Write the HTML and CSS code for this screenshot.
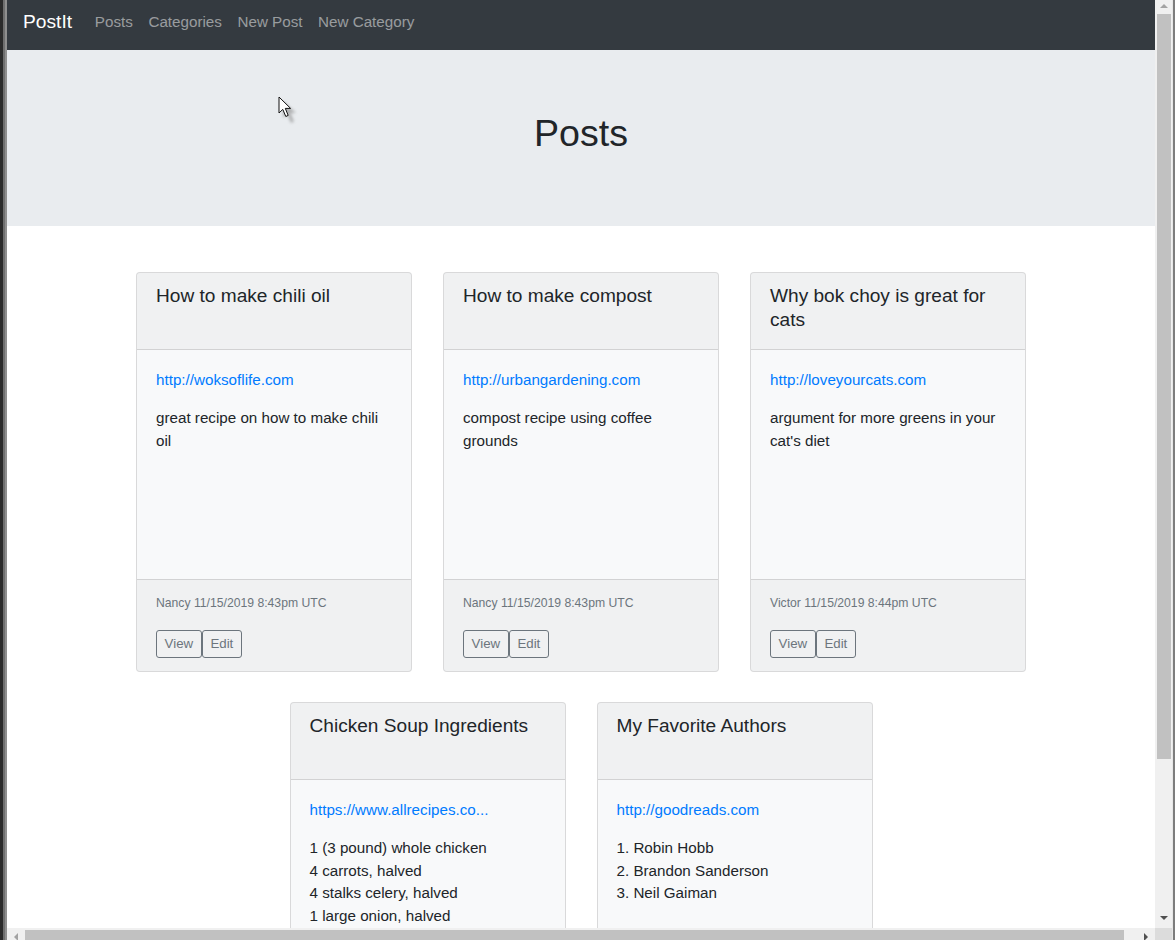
FILE: index.html
```html
<!DOCTYPE html>
<html lang="en">
<head>
<meta charset="utf-8">
<title>PostIt</title>
<link rel="stylesheet" href="styles.css">
</head>
<body>
<div class="window">
  <div class="left-edge"></div>
  <div class="main">
    <div class="view-row">
      <div class="viewport">
        <nav class="navbar">
          <a class="brand" href="#">PostIt</a>
          <a class="nav-link" href="#">Posts</a>
          <a class="nav-link" href="#">Categories</a>
          <a class="nav-link" href="#">New Post</a>
          <a class="nav-link" href="#">New Category</a>
        </nav>
        <header class="jumbotron">
          <h1 class="page-title">Posts</h1>
          <svg class="cursor" width="24" height="30" viewBox="0 0 24 30">
            <defs><filter id="blur" x="-50%" y="-50%" width="200%" height="200%"><feGaussianBlur stdDeviation="1.6"/></filter></defs>
            <path d="M5 5 L5 22 L9 18 L13 27 L16 25.5 L12.5 17 L18 17 Z" fill="#8a8a8a" opacity="0.6" filter="url(#blur)"/>
            <path d="M1 1 L1 17 L4.8 13.4 L7.8 20.5 L10.2 19.4 L7.3 12.4 L12.6 12.4 Z" fill="#fff" stroke="#111" stroke-width="1" stroke-linejoin="miter"/>
          </svg>
        </header>
        <main class="container">
          <div class="cards">
            <article class="card">
              <div class="card-header"><h5 class="card-title">How to make chili oil</h5></div>
              <div class="card-body">
                <p class="card-link"><a href="#">http://woksoflife.com</a></p>
                <p class="card-text">great recipe on how to make chili oil</p>
              </div>
              <div class="card-footer">
                <p class="meta">Nancy 11/15/2019 8:43pm UTC</p>
                <div class="actions"><a class="btn" href="#">View</a><a class="btn" href="#">Edit</a></div>
              </div>
            </article>
            <article class="card">
              <div class="card-header"><h5 class="card-title">How to make compost</h5></div>
              <div class="card-body">
                <p class="card-link"><a href="#">http://urbangardening.com</a></p>
                <p class="card-text">compost recipe using coffee grounds</p>
              </div>
              <div class="card-footer">
                <p class="meta">Nancy 11/15/2019 8:43pm UTC</p>
                <div class="actions"><a class="btn" href="#">View</a><a class="btn" href="#">Edit</a></div>
              </div>
            </article>
            <article class="card">
              <div class="card-header"><h5 class="card-title">Why bok choy is great for cats</h5></div>
              <div class="card-body">
                <p class="card-link"><a href="#">http://loveyourcats.com</a></p>
                <p class="card-text">argument for more greens in your cat's diet</p>
              </div>
              <div class="card-footer">
                <p class="meta">Victor 11/15/2019 8:44pm UTC</p>
                <div class="actions"><a class="btn" href="#">View</a><a class="btn" href="#">Edit</a></div>
              </div>
            </article>
            <article class="card">
              <div class="card-header"><h5 class="card-title">Chicken Soup Ingredients</h5></div>
              <div class="card-body">
                <p class="card-link"><a href="#">https://www.allrecipes.co...</a></p>
                <p class="card-text">1 (3 pound) whole chicken<br>4 carrots, halved<br>4 stalks celery, halved<br>1 large onion, halved</p>
              </div>
            </article>
            <article class="card">
              <div class="card-header"><h5 class="card-title">My Favorite Authors</h5></div>
              <div class="card-body">
                <p class="card-link"><a href="#">http://goodreads.com</a></p>
                <p class="card-text">1. Robin Hobb<br>2. Brandon Sanderson<br>3. Neil Gaiman</p>
              </div>
            </article>
          </div>
        </main>
      </div>
      <div class="vscroll">
        <div class="arrow-up"></div>
        <div class="vthumb"></div>
        <div class="vspace"></div>
        <div class="arrow-down"></div>
      </div>
    </div>
    <div class="hscroll">
      <div class="arrow-left"></div>
      <div class="hthumb"></div>
      <div class="arrow-right"></div>
      <div class="corner"></div>
    </div>
  </div>
  <div class="right-edge"></div>
</div>
</body>
</html>
```
FILE: styles.css
```css
* { box-sizing: border-box; }
html, body { margin: 0; padding: 0; height: 940px; overflow: hidden; }
body { font-family: "Liberation Sans", Arial, sans-serif; color: #212529; background: #fff; }

.window { display: flex; width: 1175px; height: 940px; }
.left-edge {
  width: 7px; flex: none;
  background: linear-gradient(to right, #2b2b2b 0 3px, #6e6e6e 3px 5px, #8f8f8f 5px 7px);
}
.right-edge {
  width: 3px; flex: none;
  background: linear-gradient(to right, #e6e6e6 0 1px, #7d7d7d 1px 3px);
}
.main { flex: 1; display: flex; flex-direction: column; min-width: 0; }
.view-row { display: flex; height: 928px; }
.viewport { width: 1148px; height: 928px; overflow: hidden; background: #fff; flex: none; }

/* vertical scrollbar */
.vscroll { width: 17px; flex: none; background: #f0f0f0; display: flex; flex-direction: column; align-items: center; }
.arrow-up { height: 14px; width: 17px; position: relative; }
.arrow-up::after {
  content: ""; position: absolute; left: 5px; top: 4px;
  border-left: 4px solid transparent; border-right: 4px solid transparent; border-bottom: 4px solid #a3a3a3;
}
.vthumb { width: 14px; height: 745px; background: #c1c1c1; }
.vspace { flex: 1; }
.arrow-down { height: 17px; width: 17px; position: relative; }
.arrow-down::after {
  content: ""; position: absolute; left: 5px; top: 5px;
  border-left: 4px solid transparent; border-right: 4px solid transparent; border-top: 4px solid #505050;
}

/* horizontal scrollbar */
.hscroll { height: 12px; display: flex; background: #f0f0f0; }
.arrow-left { width: 18px; flex: none; position: relative; }
.arrow-left::after {
  content: ""; position: absolute; left: 7px; top: 5px;
  border-top: 4px solid transparent; border-bottom: 4px solid transparent; border-right: 4px solid #a3a3a3;
}
.hthumb { width: 1099px; margin-top: 2px; background: #c1c1c1; flex: none; }
.arrow-right { flex: 1; position: relative; }
.arrow-right::after {
  content: ""; position: absolute; left: 20px; top: 5px;
  border-top: 4px solid transparent; border-bottom: 4px solid transparent; border-left: 4px solid #505050;
}
.corner { width: 17px; flex: none; background: #dcdcdc; }

/* navbar */
.navbar {
  height: 50px; background: #343a40; display: flex; align-items: center;
  padding: 0 16px 6px;
}
.brand { color: #fff; font-size: 19.2px; text-decoration: none; margin-right: 15px; line-height: 28px; }
.nav-link { color: rgba(255,255,255,.5); font-size: 15.2px; text-decoration: none; padding: 0 7.8px; line-height: 22px; }

/* jumbotron */
.jumbotron {
  position: relative;
  background: #e9ecef; height: 176px; padding-top: 59px; text-align: center;
}
.page-title { margin: 0; font-size: 37.6px; font-weight: 400; line-height: 48px; }
.cursor { position: absolute; left: 271px; top: 46px; }

/* cards */
.container { width: 1110px; margin: 0 auto; padding-top: 46px; }
.cards { display: flex; flex-wrap: wrap; justify-content: center; gap: 30px 31px; }
.card {
  width: 276px; height: 400px; background: #f8f9fa;
  border: 1px solid rgba(0,0,0,.125); border-radius: 4px; overflow: hidden;
  display: flex; flex-direction: column; font-size: 15.2px; line-height: 22.8px;
}
.card-header {
  height: 77px; flex: none; padding: 11px 19px 0;
  background: rgba(0,0,0,.03); border-bottom: 1px solid rgba(0,0,0,.125);
}
.card-title { margin: 0; font-size: 19.1px; font-weight: 400; line-height: 24px; }
.card-body { height: 229px; flex: none; padding: 19px 19px 0; overflow: hidden; }
.card-link { margin: 0 0 15px; }
.card-link a { color: #007bff; text-decoration: none; }
.card-text { margin: 0; }
.card-footer {
  flex: 1; padding: 12px 19px 0;
  background: rgba(0,0,0,.03); border-top: 1px solid rgba(0,0,0,.125);
}
.meta { margin: 0 0 15px; font-size: 12.2px; color: #6c757d; }
.actions { display: flex; }
.btn {
  display: inline-block; color: #6c757d; border: 1px solid #6c757d; border-radius: 3px;
  font-size: 13.3px; line-height: 20px; padding: 3px 7.6px; text-decoration: none;
}
```
